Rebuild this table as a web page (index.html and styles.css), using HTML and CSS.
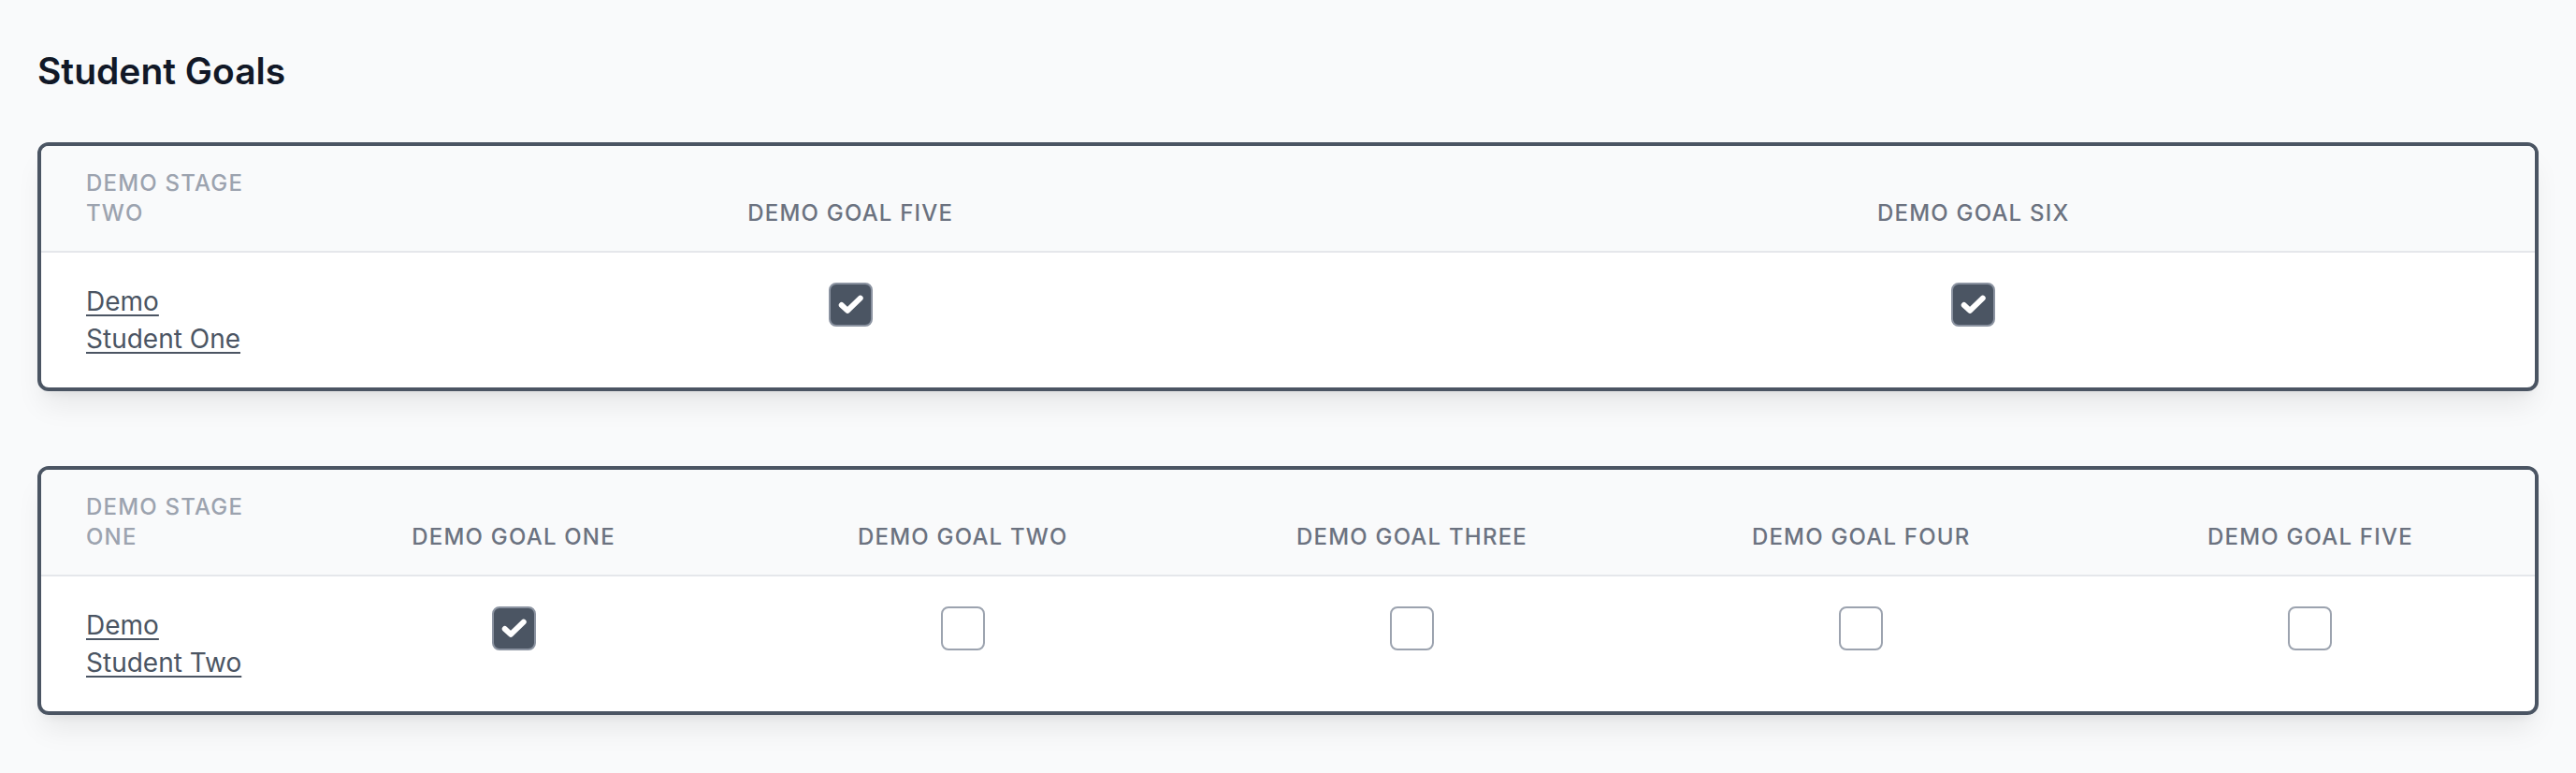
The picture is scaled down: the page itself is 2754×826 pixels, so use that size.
FILE: index.html
```html
<!DOCTYPE html>
<html lang="en">
<head>
<meta charset="utf-8">
<title>Student Goals</title>
<link rel="stylesheet" href="styles.css">
</head>
<body>
<main class="page">
  <h1 class="title">Student Goals</h1>

  <section class="card">
    <div class="row head cols-2">
      <div class="cell stage">Demo Stage Two</div>
      <div class="cell goal">Demo Goal Five</div>
      <div class="cell goal">Demo Goal Six</div>
    </div>
    <div class="row body cols-2">
      <div class="cell name"><a href="#">Demo Student One</a></div>
      <div class="cell check"><span class="box checked"><svg viewBox="0 0 48 48"><polyline points="14,24.5 20.5,30.5 34.5,17"/></svg></span></div>
      <div class="cell check"><span class="box checked"><svg viewBox="0 0 48 48"><polyline points="14,24.5 20.5,30.5 34.5,17"/></svg></span></div>
    </div>
  </section>

  <section class="card">
    <div class="row head cols-5">
      <div class="cell stage">Demo Stage One</div>
      <div class="cell goal">Demo Goal One</div>
      <div class="cell goal">Demo Goal Two</div>
      <div class="cell goal">Demo Goal Three</div>
      <div class="cell goal">Demo Goal Four</div>
      <div class="cell goal">Demo Goal Five</div>
    </div>
    <div class="row body cols-5">
      <div class="cell name"><a href="#">Demo Student Two</a></div>
      <div class="cell check"><span class="box checked"><svg viewBox="0 0 48 48"><polyline points="14,24.5 20.5,30.5 34.5,17"/></svg></span></div>
      <div class="cell check"><span class="box"></span></div>
      <div class="cell check"><span class="box"></span></div>
      <div class="cell check"><span class="box"></span></div>
      <div class="cell check"><span class="box"></span></div>
    </div>
  </section>
</main>
</body>
</html>
```

FILE: styles.css
```css
* { box-sizing: border-box; }

html, body {
  margin: 0;
  padding: 0;
  background: #f9fafb;
  font-family: "Inter", "Noto Sans", sans-serif;
}

.page {
  padding: 48px 40px 40px;
}

.title {
  margin: 0 0 48px;
  font-size: 39px;
  line-height: 56px;
  font-weight: 600;
  color: #111827;
}

.card {
  border: 4px solid #4b5563;
  border-radius: 12px;
  background: #ffffff;
  overflow: hidden;
  box-shadow: 0 20px 30px -6px rgba(0, 0, 0, 0.08), 0 8px 12px -8px rgba(0, 0, 0, 0.08);
  margin-bottom: 80px;
}

.card:last-child {
  margin-bottom: 0;
}

.row {
  display: grid;
}

.cols-2 { grid-template-columns: 265px repeat(2, 1fr); }
.cols-5 { grid-template-columns: 265px repeat(5, 1fr); }

.head {
  background: #f9fafb;
  border-bottom: 2px solid #e5e7eb;
}

.head .cell {
  padding: 24px 48px;
  font-size: 24px;
  line-height: 32px;
  font-weight: 500;
  letter-spacing: 0.05em;
  text-transform: uppercase;
  align-self: end;
}

.stage {
  color: #9ca3af;
}

.goal {
  color: #6b7280;
  text-align: center;
  white-space: nowrap;
}

.body .cell {
  padding: 32px 48px;
}

.name {
  font-size: 28px;
  line-height: 40px;
}

.name a {
  color: #4b5563;
  text-decoration: underline;
  text-underline-offset: 4px;
  text-decoration-thickness: 2px;
}

.check {
  display: flex;
  justify-content: center;
  align-items: flex-start;
}

.box {
  display: block;
  width: 47px;
  height: 47px;
  border: 2px solid #9ca3af;
  border-radius: 8px;
  background: #ffffff;
}

.box.checked {
  background: #4b5563;
  border-color: #8b93a1;
}

.box svg {
  display: block;
  margin: -2px;
  width: 47px;
  height: 47px;
}

.box polyline {
  fill: none;
  stroke: #ffffff;
  stroke-width: 6;
  stroke-linecap: round;
  stroke-linejoin: round;
}
```
